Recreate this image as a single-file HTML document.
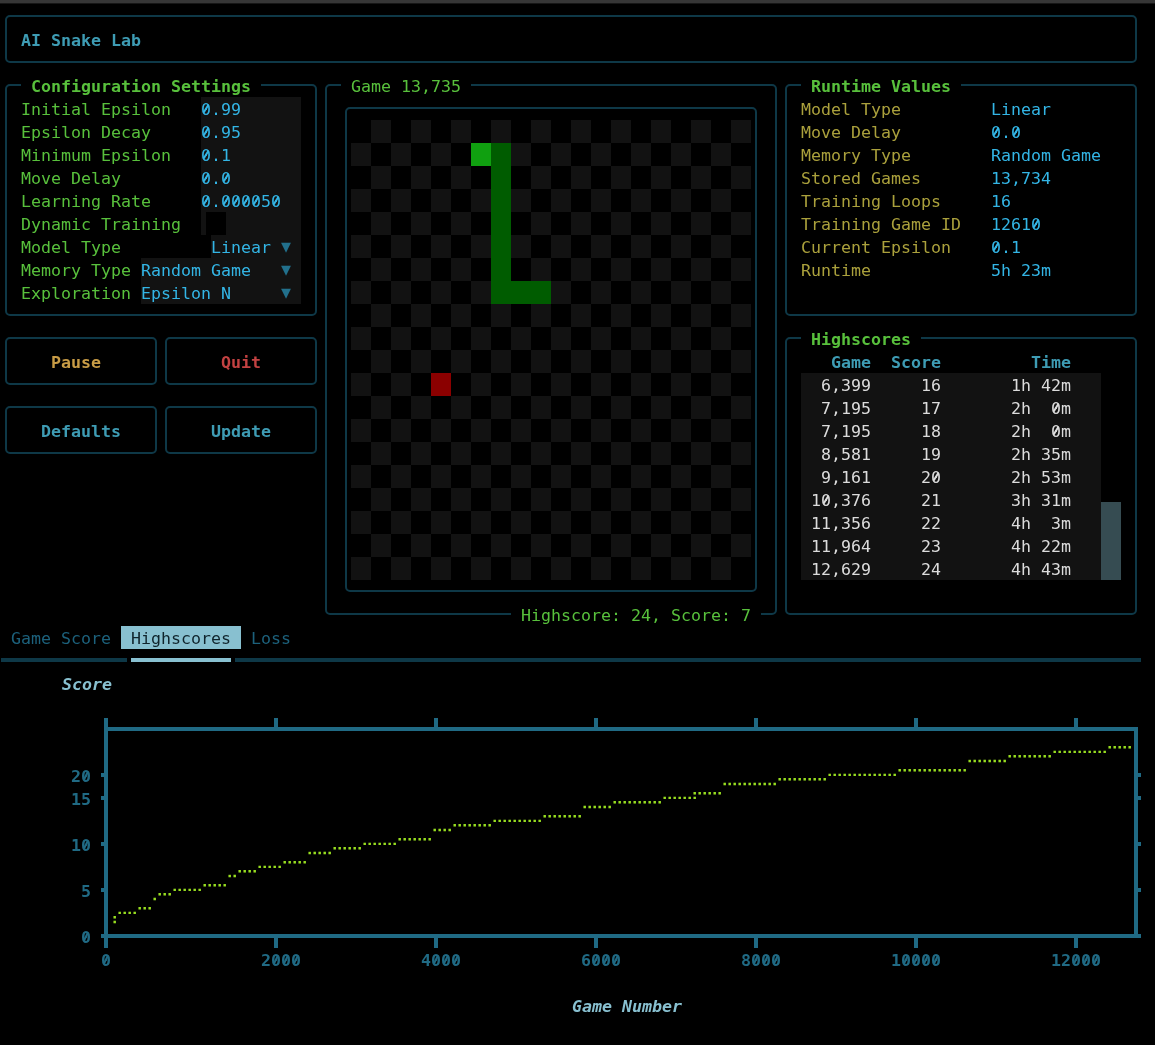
<!DOCTYPE html>
<html lang="en"><head><meta charset="utf-8"><title>AI Snake Lab</title>
<style>
html,body{margin:0;padding:0;background:#000;}
#s{position:relative;width:1155px;height:1045px;background:#000;overflow:hidden;
font-family:"DejaVu Sans Mono","Liberation Mono",monospace;font-size:16.61px;line-height:23px;}
#s svg{position:absolute;left:0;top:0;}
#tx{position:absolute;left:0;top:0;width:1155px;height:1045px;will-change:transform;}
.t{position:absolute;white-space:pre;height:23px;line-height:23px;}
.b{font-weight:bold;}
.i{font-style:italic;margin-left:1px;}
.z{position:relative;}
.z::after{content:"";position:absolute;left:4.3px;top:3.6px;width:1.7px;height:9.4px;background:currentColor;transform:rotate(32deg);}
.b .z::after{left:4px;top:4.3px;width:2px;height:9px;transform:rotate(26deg);}
.br{font-family:"DejaVu Sans",sans-serif;color:#98de20;}
</style></head><body><div id="s">
<svg width="1155" height="1045" viewBox="0 0 1155 1045">
<rect x="0" y="0" width="1155" height="3" fill="#363636"/>
<rect x="0" y="3" width="1155" height="1" fill="#161616"/>
<path d="M6 20 A4 4 0 0 1 10 16 L1132 16 A4 4 0 0 1 1136 20 M6 58 A4 4 0 0 0 10 62 L1132 62 A4 4 0 0 0 1136 58 M6 20 L6 58 M1136 20 L1136 58" fill="none" stroke="#0e3847" stroke-width="2"/>
<path d="M6 89 A4 4 0 0 1 10 85 L21 85 M261 85 L312 85 A4 4 0 0 1 316 89 M6 311 A4 4 0 0 0 10 315 L312 315 A4 4 0 0 0 316 311 M6 89 L6 311 M316 89 L316 311" fill="none" stroke="#0e3847" stroke-width="2"/>
<rect x="201" y="97" width="100" height="138" fill="#121212"/>
<rect x="211" y="235" width="90" height="23" fill="#121212"/>
<rect x="141" y="258" width="160" height="46" fill="#121212"/>
<rect x="206" y="212" width="20" height="23" fill="#000"/>
<path d="M6 342 A4 4 0 0 1 10 338 L152 338 A4 4 0 0 1 156 342 M6 380 A4 4 0 0 0 10 384 L152 384 A4 4 0 0 0 156 380 M6 342 L6 380 M156 342 L156 380" fill="none" stroke="#0e3847" stroke-width="2"/>
<path d="M166 342 A4 4 0 0 1 170 338 L312 338 A4 4 0 0 1 316 342 M166 380 A4 4 0 0 0 170 384 L312 384 A4 4 0 0 0 316 380 M166 342 L166 380 M316 342 L316 380" fill="none" stroke="#0e3847" stroke-width="2"/>
<path d="M6 411 A4 4 0 0 1 10 407 L152 407 A4 4 0 0 1 156 411 M6 449 A4 4 0 0 0 10 453 L152 453 A4 4 0 0 0 156 449 M6 411 L6 449 M156 411 L156 449" fill="none" stroke="#0e3847" stroke-width="2"/>
<path d="M166 411 A4 4 0 0 1 170 407 L312 407 A4 4 0 0 1 316 411 M166 449 A4 4 0 0 0 170 453 L312 453 A4 4 0 0 0 316 449 M166 411 L166 449 M316 411 L316 449" fill="none" stroke="#0e3847" stroke-width="2"/>
<path d="M326 89 A4 4 0 0 1 330 85 L341 85 M471 85 L772 85 A4 4 0 0 1 776 89 M326 610 A4 4 0 0 0 330 614 L511 614 M761 614 L772 614 A4 4 0 0 0 776 610 M326 89 L326 610 M776 89 L776 610" fill="none" stroke="#0e3847" stroke-width="2"/>
<path d="M346 112 A4 4 0 0 1 350 108 L752 108 A4 4 0 0 1 756 112 M346 587 A4 4 0 0 0 350 591 L752 591 A4 4 0 0 0 756 587 M346 112 L346 587 M756 112 L756 587" fill="none" stroke="#0e3847" stroke-width="2"/>
<rect x="371" y="120" width="20" height="23" fill="#121212"/>
<rect x="411" y="120" width="20" height="23" fill="#121212"/>
<rect x="451" y="120" width="20" height="23" fill="#121212"/>
<rect x="491" y="120" width="20" height="23" fill="#121212"/>
<rect x="531" y="120" width="20" height="23" fill="#121212"/>
<rect x="571" y="120" width="20" height="23" fill="#121212"/>
<rect x="611" y="120" width="20" height="23" fill="#121212"/>
<rect x="651" y="120" width="20" height="23" fill="#121212"/>
<rect x="691" y="120" width="20" height="23" fill="#121212"/>
<rect x="731" y="120" width="20" height="23" fill="#121212"/>
<rect x="351" y="143" width="20" height="23" fill="#121212"/>
<rect x="391" y="143" width="20" height="23" fill="#121212"/>
<rect x="431" y="143" width="20" height="23" fill="#121212"/>
<rect x="471" y="143" width="20" height="23" fill="#121212"/>
<rect x="511" y="143" width="20" height="23" fill="#121212"/>
<rect x="551" y="143" width="20" height="23" fill="#121212"/>
<rect x="591" y="143" width="20" height="23" fill="#121212"/>
<rect x="631" y="143" width="20" height="23" fill="#121212"/>
<rect x="671" y="143" width="20" height="23" fill="#121212"/>
<rect x="711" y="143" width="20" height="23" fill="#121212"/>
<rect x="371" y="166" width="20" height="23" fill="#121212"/>
<rect x="411" y="166" width="20" height="23" fill="#121212"/>
<rect x="451" y="166" width="20" height="23" fill="#121212"/>
<rect x="491" y="166" width="20" height="23" fill="#121212"/>
<rect x="531" y="166" width="20" height="23" fill="#121212"/>
<rect x="571" y="166" width="20" height="23" fill="#121212"/>
<rect x="611" y="166" width="20" height="23" fill="#121212"/>
<rect x="651" y="166" width="20" height="23" fill="#121212"/>
<rect x="691" y="166" width="20" height="23" fill="#121212"/>
<rect x="731" y="166" width="20" height="23" fill="#121212"/>
<rect x="351" y="189" width="20" height="23" fill="#121212"/>
<rect x="391" y="189" width="20" height="23" fill="#121212"/>
<rect x="431" y="189" width="20" height="23" fill="#121212"/>
<rect x="471" y="189" width="20" height="23" fill="#121212"/>
<rect x="511" y="189" width="20" height="23" fill="#121212"/>
<rect x="551" y="189" width="20" height="23" fill="#121212"/>
<rect x="591" y="189" width="20" height="23" fill="#121212"/>
<rect x="631" y="189" width="20" height="23" fill="#121212"/>
<rect x="671" y="189" width="20" height="23" fill="#121212"/>
<rect x="711" y="189" width="20" height="23" fill="#121212"/>
<rect x="371" y="212" width="20" height="23" fill="#121212"/>
<rect x="411" y="212" width="20" height="23" fill="#121212"/>
<rect x="451" y="212" width="20" height="23" fill="#121212"/>
<rect x="491" y="212" width="20" height="23" fill="#121212"/>
<rect x="531" y="212" width="20" height="23" fill="#121212"/>
<rect x="571" y="212" width="20" height="23" fill="#121212"/>
<rect x="611" y="212" width="20" height="23" fill="#121212"/>
<rect x="651" y="212" width="20" height="23" fill="#121212"/>
<rect x="691" y="212" width="20" height="23" fill="#121212"/>
<rect x="731" y="212" width="20" height="23" fill="#121212"/>
<rect x="351" y="235" width="20" height="23" fill="#121212"/>
<rect x="391" y="235" width="20" height="23" fill="#121212"/>
<rect x="431" y="235" width="20" height="23" fill="#121212"/>
<rect x="471" y="235" width="20" height="23" fill="#121212"/>
<rect x="511" y="235" width="20" height="23" fill="#121212"/>
<rect x="551" y="235" width="20" height="23" fill="#121212"/>
<rect x="591" y="235" width="20" height="23" fill="#121212"/>
<rect x="631" y="235" width="20" height="23" fill="#121212"/>
<rect x="671" y="235" width="20" height="23" fill="#121212"/>
<rect x="711" y="235" width="20" height="23" fill="#121212"/>
<rect x="371" y="258" width="20" height="23" fill="#121212"/>
<rect x="411" y="258" width="20" height="23" fill="#121212"/>
<rect x="451" y="258" width="20" height="23" fill="#121212"/>
<rect x="491" y="258" width="20" height="23" fill="#121212"/>
<rect x="531" y="258" width="20" height="23" fill="#121212"/>
<rect x="571" y="258" width="20" height="23" fill="#121212"/>
<rect x="611" y="258" width="20" height="23" fill="#121212"/>
<rect x="651" y="258" width="20" height="23" fill="#121212"/>
<rect x="691" y="258" width="20" height="23" fill="#121212"/>
<rect x="731" y="258" width="20" height="23" fill="#121212"/>
<rect x="351" y="281" width="20" height="23" fill="#121212"/>
<rect x="391" y="281" width="20" height="23" fill="#121212"/>
<rect x="431" y="281" width="20" height="23" fill="#121212"/>
<rect x="471" y="281" width="20" height="23" fill="#121212"/>
<rect x="511" y="281" width="20" height="23" fill="#121212"/>
<rect x="551" y="281" width="20" height="23" fill="#121212"/>
<rect x="591" y="281" width="20" height="23" fill="#121212"/>
<rect x="631" y="281" width="20" height="23" fill="#121212"/>
<rect x="671" y="281" width="20" height="23" fill="#121212"/>
<rect x="711" y="281" width="20" height="23" fill="#121212"/>
<rect x="371" y="304" width="20" height="23" fill="#121212"/>
<rect x="411" y="304" width="20" height="23" fill="#121212"/>
<rect x="451" y="304" width="20" height="23" fill="#121212"/>
<rect x="491" y="304" width="20" height="23" fill="#121212"/>
<rect x="531" y="304" width="20" height="23" fill="#121212"/>
<rect x="571" y="304" width="20" height="23" fill="#121212"/>
<rect x="611" y="304" width="20" height="23" fill="#121212"/>
<rect x="651" y="304" width="20" height="23" fill="#121212"/>
<rect x="691" y="304" width="20" height="23" fill="#121212"/>
<rect x="731" y="304" width="20" height="23" fill="#121212"/>
<rect x="351" y="327" width="20" height="23" fill="#121212"/>
<rect x="391" y="327" width="20" height="23" fill="#121212"/>
<rect x="431" y="327" width="20" height="23" fill="#121212"/>
<rect x="471" y="327" width="20" height="23" fill="#121212"/>
<rect x="511" y="327" width="20" height="23" fill="#121212"/>
<rect x="551" y="327" width="20" height="23" fill="#121212"/>
<rect x="591" y="327" width="20" height="23" fill="#121212"/>
<rect x="631" y="327" width="20" height="23" fill="#121212"/>
<rect x="671" y="327" width="20" height="23" fill="#121212"/>
<rect x="711" y="327" width="20" height="23" fill="#121212"/>
<rect x="371" y="350" width="20" height="23" fill="#121212"/>
<rect x="411" y="350" width="20" height="23" fill="#121212"/>
<rect x="451" y="350" width="20" height="23" fill="#121212"/>
<rect x="491" y="350" width="20" height="23" fill="#121212"/>
<rect x="531" y="350" width="20" height="23" fill="#121212"/>
<rect x="571" y="350" width="20" height="23" fill="#121212"/>
<rect x="611" y="350" width="20" height="23" fill="#121212"/>
<rect x="651" y="350" width="20" height="23" fill="#121212"/>
<rect x="691" y="350" width="20" height="23" fill="#121212"/>
<rect x="731" y="350" width="20" height="23" fill="#121212"/>
<rect x="351" y="373" width="20" height="23" fill="#121212"/>
<rect x="391" y="373" width="20" height="23" fill="#121212"/>
<rect x="431" y="373" width="20" height="23" fill="#121212"/>
<rect x="471" y="373" width="20" height="23" fill="#121212"/>
<rect x="511" y="373" width="20" height="23" fill="#121212"/>
<rect x="551" y="373" width="20" height="23" fill="#121212"/>
<rect x="591" y="373" width="20" height="23" fill="#121212"/>
<rect x="631" y="373" width="20" height="23" fill="#121212"/>
<rect x="671" y="373" width="20" height="23" fill="#121212"/>
<rect x="711" y="373" width="20" height="23" fill="#121212"/>
<rect x="371" y="396" width="20" height="23" fill="#121212"/>
<rect x="411" y="396" width="20" height="23" fill="#121212"/>
<rect x="451" y="396" width="20" height="23" fill="#121212"/>
<rect x="491" y="396" width="20" height="23" fill="#121212"/>
<rect x="531" y="396" width="20" height="23" fill="#121212"/>
<rect x="571" y="396" width="20" height="23" fill="#121212"/>
<rect x="611" y="396" width="20" height="23" fill="#121212"/>
<rect x="651" y="396" width="20" height="23" fill="#121212"/>
<rect x="691" y="396" width="20" height="23" fill="#121212"/>
<rect x="731" y="396" width="20" height="23" fill="#121212"/>
<rect x="351" y="419" width="20" height="23" fill="#121212"/>
<rect x="391" y="419" width="20" height="23" fill="#121212"/>
<rect x="431" y="419" width="20" height="23" fill="#121212"/>
<rect x="471" y="419" width="20" height="23" fill="#121212"/>
<rect x="511" y="419" width="20" height="23" fill="#121212"/>
<rect x="551" y="419" width="20" height="23" fill="#121212"/>
<rect x="591" y="419" width="20" height="23" fill="#121212"/>
<rect x="631" y="419" width="20" height="23" fill="#121212"/>
<rect x="671" y="419" width="20" height="23" fill="#121212"/>
<rect x="711" y="419" width="20" height="23" fill="#121212"/>
<rect x="371" y="442" width="20" height="23" fill="#121212"/>
<rect x="411" y="442" width="20" height="23" fill="#121212"/>
<rect x="451" y="442" width="20" height="23" fill="#121212"/>
<rect x="491" y="442" width="20" height="23" fill="#121212"/>
<rect x="531" y="442" width="20" height="23" fill="#121212"/>
<rect x="571" y="442" width="20" height="23" fill="#121212"/>
<rect x="611" y="442" width="20" height="23" fill="#121212"/>
<rect x="651" y="442" width="20" height="23" fill="#121212"/>
<rect x="691" y="442" width="20" height="23" fill="#121212"/>
<rect x="731" y="442" width="20" height="23" fill="#121212"/>
<rect x="351" y="465" width="20" height="23" fill="#121212"/>
<rect x="391" y="465" width="20" height="23" fill="#121212"/>
<rect x="431" y="465" width="20" height="23" fill="#121212"/>
<rect x="471" y="465" width="20" height="23" fill="#121212"/>
<rect x="511" y="465" width="20" height="23" fill="#121212"/>
<rect x="551" y="465" width="20" height="23" fill="#121212"/>
<rect x="591" y="465" width="20" height="23" fill="#121212"/>
<rect x="631" y="465" width="20" height="23" fill="#121212"/>
<rect x="671" y="465" width="20" height="23" fill="#121212"/>
<rect x="711" y="465" width="20" height="23" fill="#121212"/>
<rect x="371" y="488" width="20" height="23" fill="#121212"/>
<rect x="411" y="488" width="20" height="23" fill="#121212"/>
<rect x="451" y="488" width="20" height="23" fill="#121212"/>
<rect x="491" y="488" width="20" height="23" fill="#121212"/>
<rect x="531" y="488" width="20" height="23" fill="#121212"/>
<rect x="571" y="488" width="20" height="23" fill="#121212"/>
<rect x="611" y="488" width="20" height="23" fill="#121212"/>
<rect x="651" y="488" width="20" height="23" fill="#121212"/>
<rect x="691" y="488" width="20" height="23" fill="#121212"/>
<rect x="731" y="488" width="20" height="23" fill="#121212"/>
<rect x="351" y="511" width="20" height="23" fill="#121212"/>
<rect x="391" y="511" width="20" height="23" fill="#121212"/>
<rect x="431" y="511" width="20" height="23" fill="#121212"/>
<rect x="471" y="511" width="20" height="23" fill="#121212"/>
<rect x="511" y="511" width="20" height="23" fill="#121212"/>
<rect x="551" y="511" width="20" height="23" fill="#121212"/>
<rect x="591" y="511" width="20" height="23" fill="#121212"/>
<rect x="631" y="511" width="20" height="23" fill="#121212"/>
<rect x="671" y="511" width="20" height="23" fill="#121212"/>
<rect x="711" y="511" width="20" height="23" fill="#121212"/>
<rect x="371" y="534" width="20" height="23" fill="#121212"/>
<rect x="411" y="534" width="20" height="23" fill="#121212"/>
<rect x="451" y="534" width="20" height="23" fill="#121212"/>
<rect x="491" y="534" width="20" height="23" fill="#121212"/>
<rect x="531" y="534" width="20" height="23" fill="#121212"/>
<rect x="571" y="534" width="20" height="23" fill="#121212"/>
<rect x="611" y="534" width="20" height="23" fill="#121212"/>
<rect x="651" y="534" width="20" height="23" fill="#121212"/>
<rect x="691" y="534" width="20" height="23" fill="#121212"/>
<rect x="731" y="534" width="20" height="23" fill="#121212"/>
<rect x="351" y="557" width="20" height="23" fill="#121212"/>
<rect x="391" y="557" width="20" height="23" fill="#121212"/>
<rect x="431" y="557" width="20" height="23" fill="#121212"/>
<rect x="471" y="557" width="20" height="23" fill="#121212"/>
<rect x="511" y="557" width="20" height="23" fill="#121212"/>
<rect x="551" y="557" width="20" height="23" fill="#121212"/>
<rect x="591" y="557" width="20" height="23" fill="#121212"/>
<rect x="631" y="557" width="20" height="23" fill="#121212"/>
<rect x="671" y="557" width="20" height="23" fill="#121212"/>
<rect x="711" y="557" width="20" height="23" fill="#121212"/>
<rect x="491" y="143" width="20" height="161" fill="#005c00"/>
<rect x="491" y="281" width="60" height="23" fill="#005c00"/>
<rect x="471" y="143" width="20" height="23" fill="#10a010"/>
<rect x="431" y="373" width="20" height="23" fill="#8b0000"/>
<path d="M786 89 A4 4 0 0 1 790 85 L801 85 M961 85 L1132 85 A4 4 0 0 1 1136 89 M786 311 A4 4 0 0 0 790 315 L1132 315 A4 4 0 0 0 1136 311 M786 89 L786 311 M1136 89 L1136 311" fill="none" stroke="#0e3847" stroke-width="2"/>
<path d="M786 342 A4 4 0 0 1 790 338 L801 338 M921 338 L1132 338 A4 4 0 0 1 1136 342 M786 610 A4 4 0 0 0 790 614 L1132 614 A4 4 0 0 0 1136 610 M786 342 L786 610 M1136 342 L1136 610" fill="none" stroke="#0e3847" stroke-width="2"/>
<rect x="801" y="373" width="300" height="207" fill="#121212"/>
<rect x="1101" y="502" width="20" height="78" fill="#364c52"/>
<rect x="121" y="626" width="120" height="23" fill="#88c0d0"/>
<rect x="1" y="658" width="126" height="4" fill="#0e3847"/>
<rect x="131" y="658" width="100" height="4" fill="#88c0d0"/>
<rect x="235" y="658" width="906" height="4" fill="#0e3847"/>
<rect x="104" y="727" width="1034" height="4" fill="#206a84"/>
<rect x="104" y="934" width="1034" height="4" fill="#206a84"/>
<rect x="104" y="718" width="4" height="220" fill="#206a84"/>
<rect x="1134" y="727" width="4" height="211" fill="#206a84"/>
<rect x="104" y="718" width="4" height="9" fill="#206a84"/>
<rect x="104" y="938" width="4" height="10" fill="#206a84"/>
<rect x="274" y="718" width="4" height="9" fill="#206a84"/>
<rect x="274" y="938" width="4" height="10" fill="#206a84"/>
<rect x="434" y="718" width="4" height="9" fill="#206a84"/>
<rect x="434" y="938" width="4" height="10" fill="#206a84"/>
<rect x="594" y="718" width="4" height="9" fill="#206a84"/>
<rect x="594" y="938" width="4" height="10" fill="#206a84"/>
<rect x="754" y="718" width="4" height="9" fill="#206a84"/>
<rect x="754" y="938" width="4" height="10" fill="#206a84"/>
<rect x="914" y="718" width="4" height="9" fill="#206a84"/>
<rect x="914" y="938" width="4" height="10" fill="#206a84"/>
<rect x="1074" y="718" width="4" height="9" fill="#206a84"/>
<rect x="1074" y="938" width="4" height="10" fill="#206a84"/>
<rect x="101" y="773" width="3" height="4" fill="#206a84"/>
<rect x="1138" y="773" width="3" height="4" fill="#206a84"/>
<rect x="101" y="796" width="3" height="4" fill="#206a84"/>
<rect x="1138" y="796" width="3" height="4" fill="#206a84"/>
<rect x="101" y="842" width="3" height="4" fill="#206a84"/>
<rect x="1138" y="842" width="3" height="4" fill="#206a84"/>
<rect x="101" y="888" width="3" height="4" fill="#206a84"/>
<rect x="1138" y="888" width="3" height="4" fill="#206a84"/>
<rect x="101" y="934" width="3" height="4" fill="#206a84"/>
<rect x="1138" y="934" width="3" height="4" fill="#206a84"/>
</svg>
<div id="tx">
<span class="t b" style="left:21px;top:29px;color:#3e9cb4;">AI Snake Lab</span>
<span class="t b" style="left:31px;top:75px;color:#58c03c;">Configuration Settings</span>
<span class="t" style="left:21px;top:98px;color:#58c03c;">Initial Epsilon</span>
<span class="t" style="left:21px;top:121px;color:#58c03c;">Epsilon Decay</span>
<span class="t" style="left:21px;top:144px;color:#58c03c;">Minimum Epsilon</span>
<span class="t" style="left:21px;top:167px;color:#58c03c;">Move Delay</span>
<span class="t" style="left:21px;top:190px;color:#58c03c;">Learning Rate</span>
<span class="t" style="left:21px;top:213px;color:#58c03c;">Dynamic Training</span>
<span class="t" style="left:21px;top:236px;color:#58c03c;">Model Type</span>
<span class="t" style="left:21px;top:259px;color:#58c03c;">Memory Type</span>
<span class="t" style="left:21px;top:282px;color:#58c03c;">Exploration</span>
<span class="t" style="left:201px;top:98px;color:#33b5e5;"><span class="z">0</span>.99</span>
<span class="t" style="left:201px;top:121px;color:#33b5e5;"><span class="z">0</span>.95</span>
<span class="t" style="left:201px;top:144px;color:#33b5e5;"><span class="z">0</span>.1</span>
<span class="t" style="left:201px;top:167px;color:#33b5e5;"><span class="z">0</span>.<span class="z">0</span></span>
<span class="t" style="left:201px;top:190px;color:#33b5e5;"><span class="z">0</span>.<span class="z">0</span><span class="z">0</span><span class="z">0</span><span class="z">0</span>5<span class="z">0</span></span>
<span class="t" style="left:211px;top:236px;color:#33b5e5;">Linear</span>
<span class="t" style="left:281px;top:236px;color:#22708c;margin-top:-0.6px;">▼</span>
<span class="t" style="left:141px;top:259px;color:#33b5e5;">Random Game</span>
<span class="t" style="left:281px;top:259px;color:#22708c;margin-top:-0.6px;">▼</span>
<span class="t" style="left:141px;top:282px;color:#33b5e5;">Epsilon N</span>
<span class="t" style="left:281px;top:282px;color:#22708c;margin-top:-0.6px;">▼</span>
<span class="t b" style="left:51px;top:351px;color:#c89c46;">Pause</span>
<span class="t b" style="left:221px;top:351px;color:#c34242;">Quit</span>
<span class="t b" style="left:41px;top:420px;color:#3e9cb4;">Defaults</span>
<span class="t b" style="left:211px;top:420px;color:#3e9cb4;">Update</span>
<span class="t" style="left:351px;top:75px;color:#58c03c;">Game 13,735</span>
<span class="t" style="left:521px;top:604px;color:#58c03c;">Highscore: 24, Score: 7</span>
<span class="t b" style="left:811px;top:75px;color:#58c03c;">Runtime Values</span>
<span class="t" style="left:801px;top:98px;color:#aaa03c;">Model Type</span>
<span class="t" style="left:991px;top:98px;color:#33b5e5;">Linear</span>
<span class="t" style="left:801px;top:121px;color:#aaa03c;">Move Delay</span>
<span class="t" style="left:991px;top:121px;color:#33b5e5;"><span class="z">0</span>.<span class="z">0</span></span>
<span class="t" style="left:801px;top:144px;color:#aaa03c;">Memory Type</span>
<span class="t" style="left:991px;top:144px;color:#33b5e5;">Random Game</span>
<span class="t" style="left:801px;top:167px;color:#aaa03c;">Stored Games</span>
<span class="t" style="left:991px;top:167px;color:#33b5e5;">13,734</span>
<span class="t" style="left:801px;top:190px;color:#aaa03c;">Training Loops</span>
<span class="t" style="left:991px;top:190px;color:#33b5e5;">16</span>
<span class="t" style="left:801px;top:213px;color:#aaa03c;">Training Game ID</span>
<span class="t" style="left:991px;top:213px;color:#33b5e5;">1261<span class="z">0</span></span>
<span class="t" style="left:801px;top:236px;color:#aaa03c;">Current Epsilon</span>
<span class="t" style="left:991px;top:236px;color:#33b5e5;"><span class="z">0</span>.1</span>
<span class="t" style="left:801px;top:259px;color:#aaa03c;">Runtime</span>
<span class="t" style="left:991px;top:259px;color:#33b5e5;">5h 23m</span>
<span class="t b" style="left:811px;top:328px;color:#58c03c;">Highscores</span>
<span class="t b" style="left:831px;top:351px;color:#3e9cb4;">Game</span>
<span class="t b" style="left:891px;top:351px;color:#3e9cb4;">Score</span>
<span class="t b" style="left:1031px;top:351px;color:#3e9cb4;">Time</span>
<span class="t" style="left:821px;top:374px;color:#dcdcdc;">6,399</span>
<span class="t" style="left:921px;top:374px;color:#dcdcdc;">16</span>
<span class="t" style="left:1011px;top:374px;color:#dcdcdc;">1h 42m</span>
<span class="t" style="left:821px;top:397px;color:#dcdcdc;">7,195</span>
<span class="t" style="left:921px;top:397px;color:#dcdcdc;">17</span>
<span class="t" style="left:1011px;top:397px;color:#dcdcdc;">2h  <span class="z">0</span>m</span>
<span class="t" style="left:821px;top:420px;color:#dcdcdc;">7,195</span>
<span class="t" style="left:921px;top:420px;color:#dcdcdc;">18</span>
<span class="t" style="left:1011px;top:420px;color:#dcdcdc;">2h  <span class="z">0</span>m</span>
<span class="t" style="left:821px;top:443px;color:#dcdcdc;">8,581</span>
<span class="t" style="left:921px;top:443px;color:#dcdcdc;">19</span>
<span class="t" style="left:1011px;top:443px;color:#dcdcdc;">2h 35m</span>
<span class="t" style="left:821px;top:466px;color:#dcdcdc;">9,161</span>
<span class="t" style="left:921px;top:466px;color:#dcdcdc;">2<span class="z">0</span></span>
<span class="t" style="left:1011px;top:466px;color:#dcdcdc;">2h 53m</span>
<span class="t" style="left:811px;top:489px;color:#dcdcdc;">1<span class="z">0</span>,376</span>
<span class="t" style="left:921px;top:489px;color:#dcdcdc;">21</span>
<span class="t" style="left:1011px;top:489px;color:#dcdcdc;">3h 31m</span>
<span class="t" style="left:811px;top:512px;color:#dcdcdc;">11,356</span>
<span class="t" style="left:921px;top:512px;color:#dcdcdc;">22</span>
<span class="t" style="left:1011px;top:512px;color:#dcdcdc;">4h  3m</span>
<span class="t" style="left:811px;top:535px;color:#dcdcdc;">11,964</span>
<span class="t" style="left:921px;top:535px;color:#dcdcdc;">23</span>
<span class="t" style="left:1011px;top:535px;color:#dcdcdc;">4h 22m</span>
<span class="t" style="left:811px;top:558px;color:#dcdcdc;">12,629</span>
<span class="t" style="left:921px;top:558px;color:#dcdcdc;">24</span>
<span class="t" style="left:1011px;top:558px;color:#dcdcdc;">4h 43m</span>
<span class="t" style="left:11px;top:627px;color:#1c617c;">Game Score</span>
<span class="t" style="left:131px;top:627px;color:#10242c;">Highscores</span>
<span class="t" style="left:251px;top:627px;color:#1c617c;">Loss</span>
<span class="t b i" style="left:61px;top:673px;color:#88c0d0;">Score</span>
<span class="t b i" style="left:571px;top:995px;color:#88c0d0;">Game Number</span>
<span class="t b" style="left:71px;top:765px;color:#206a84;">2<span class="z">0</span></span>
<span class="t b" style="left:71px;top:788px;color:#206a84;">15</span>
<span class="t b" style="left:71px;top:834px;color:#206a84;">1<span class="z">0</span></span>
<span class="t b" style="left:71px;top:880px;color:#206a84;"> 5</span>
<span class="t b" style="left:71px;top:926px;color:#206a84;"> <span class="z">0</span></span>
<span class="t b" style="left:101px;top:949px;color:#206a84;"><span class="z">0</span></span>
<span class="t b" style="left:261px;top:949px;color:#206a84;">2<span class="z">0</span><span class="z">0</span><span class="z">0</span></span>
<span class="t b" style="left:421px;top:949px;color:#206a84;">4<span class="z">0</span><span class="z">0</span><span class="z">0</span></span>
<span class="t b" style="left:581px;top:949px;color:#206a84;">6<span class="z">0</span><span class="z">0</span><span class="z">0</span></span>
<span class="t b" style="left:741px;top:949px;color:#206a84;">8<span class="z">0</span><span class="z">0</span><span class="z">0</span></span>
<span class="t b" style="left:891px;top:949px;color:#206a84;">1<span class="z">0</span><span class="z">0</span><span class="z">0</span><span class="z">0</span></span>
<span class="t b" style="left:1051px;top:949px;color:#206a84;">12<span class="z">0</span><span class="z">0</span><span class="z">0</span></span>
<span class="t br" style="left:111px;top:903px">⡔</span>
<span class="t br" style="left:121px;top:903px">⠒</span>
<span class="t br" style="left:131px;top:903px">⠊</span>
<span class="t br" style="left:141px;top:903px">⠉</span>
<span class="t br" style="left:151px;top:880px">⡠</span>
<span class="t br" style="left:161px;top:880px">⠤</span>
<span class="t br" style="left:171px;top:880px">⠒</span>
<span class="t br" style="left:181px;top:880px">⠒</span>
<span class="t br" style="left:191px;top:880px">⠒</span>
<span class="t br" style="left:201px;top:880px">⠉</span>
<span class="t br" style="left:211px;top:880px">⠉</span>
<span class="t br" style="left:221px;top:857px">⢀</span>
<span class="t br" style="left:221px;top:880px">⠁</span>
<span class="t br" style="left:231px;top:857px">⡠</span>
<span class="t br" style="left:241px;top:857px">⠤</span>
<span class="t br" style="left:251px;top:857px">⠔</span>
<span class="t br" style="left:261px;top:857px">⠒</span>
<span class="t br" style="left:271px;top:857px">⠒</span>
<span class="t br" style="left:281px;top:857px">⠉</span>
<span class="t br" style="left:291px;top:857px">⠉</span>
<span class="t br" style="left:301px;top:834px">⢀</span>
<span class="t br" style="left:301px;top:857px">⠁</span>
<span class="t br" style="left:311px;top:834px">⣀</span>
<span class="t br" style="left:321px;top:834px">⣀</span>
<span class="t br" style="left:331px;top:834px">⠤</span>
<span class="t br" style="left:341px;top:834px">⠤</span>
<span class="t br" style="left:351px;top:834px">⠤</span>
<span class="t br" style="left:361px;top:834px">⠒</span>
<span class="t br" style="left:371px;top:834px">⠒</span>
<span class="t br" style="left:381px;top:834px">⠒</span>
<span class="t br" style="left:391px;top:834px">⠊</span>
<span class="t br" style="left:401px;top:834px">⠉</span>
<span class="t br" style="left:411px;top:834px">⠉</span>
<span class="t br" style="left:421px;top:834px">⠉</span>
<span class="t br" style="left:431px;top:811px">⣀</span>
<span class="t br" style="left:441px;top:811px">⣀</span>
<span class="t br" style="left:451px;top:811px">⠤</span>
<span class="t br" style="left:461px;top:811px">⠤</span>
<span class="t br" style="left:471px;top:811px">⠤</span>
<span class="t br" style="left:481px;top:811px">⠤</span>
<span class="t br" style="left:491px;top:811px">⠒</span>
<span class="t br" style="left:501px;top:811px">⠒</span>
<span class="t br" style="left:511px;top:811px">⠒</span>
<span class="t br" style="left:521px;top:811px">⠒</span>
<span class="t br" style="left:531px;top:811px">⠒</span>
<span class="t br" style="left:541px;top:811px">⠉</span>
<span class="t br" style="left:551px;top:811px">⠉</span>
<span class="t br" style="left:561px;top:811px">⠉</span>
<span class="t br" style="left:571px;top:811px">⠉</span>
<span class="t br" style="left:581px;top:788px">⣀</span>
<span class="t br" style="left:591px;top:788px">⣀</span>
<span class="t br" style="left:601px;top:788px">⣀</span>
<span class="t br" style="left:611px;top:788px">⠤</span>
<span class="t br" style="left:621px;top:788px">⠤</span>
<span class="t br" style="left:631px;top:788px">⠤</span>
<span class="t br" style="left:641px;top:788px">⠤</span>
<span class="t br" style="left:651px;top:788px">⠤</span>
<span class="t br" style="left:661px;top:788px">⠒</span>
<span class="t br" style="left:671px;top:788px">⠒</span>
<span class="t br" style="left:681px;top:788px">⠒</span>
<span class="t br" style="left:691px;top:788px">⠋</span>
<span class="t br" style="left:701px;top:788px">⠉</span>
<span class="t br" style="left:711px;top:788px">⠉</span>
<span class="t br" style="left:721px;top:765px">⣀</span>
<span class="t br" style="left:731px;top:765px">⣀</span>
<span class="t br" style="left:741px;top:765px">⣀</span>
<span class="t br" style="left:751px;top:765px">⣀</span>
<span class="t br" style="left:761px;top:765px">⣀</span>
<span class="t br" style="left:771px;top:765px">⡠</span>
<span class="t br" style="left:781px;top:765px">⠤</span>
<span class="t br" style="left:791px;top:765px">⠤</span>
<span class="t br" style="left:801px;top:765px">⠤</span>
<span class="t br" style="left:811px;top:765px">⠤</span>
<span class="t br" style="left:821px;top:765px">⠔</span>
<span class="t br" style="left:831px;top:765px">⠒</span>
<span class="t br" style="left:841px;top:765px">⠒</span>
<span class="t br" style="left:851px;top:765px">⠒</span>
<span class="t br" style="left:861px;top:765px">⠒</span>
<span class="t br" style="left:871px;top:765px">⠒</span>
<span class="t br" style="left:881px;top:765px">⠒</span>
<span class="t br" style="left:891px;top:765px">⠊</span>
<span class="t br" style="left:901px;top:765px">⠉</span>
<span class="t br" style="left:911px;top:765px">⠉</span>
<span class="t br" style="left:921px;top:765px">⠉</span>
<span class="t br" style="left:931px;top:765px">⠉</span>
<span class="t br" style="left:941px;top:765px">⠉</span>
<span class="t br" style="left:951px;top:765px">⠉</span>
<span class="t br" style="left:961px;top:742px">⢀</span>
<span class="t br" style="left:961px;top:765px">⠁</span>
<span class="t br" style="left:971px;top:742px">⣀</span>
<span class="t br" style="left:981px;top:742px">⣀</span>
<span class="t br" style="left:991px;top:742px">⣀</span>
<span class="t br" style="left:1001px;top:742px">⡠</span>
<span class="t br" style="left:1011px;top:742px">⠤</span>
<span class="t br" style="left:1021px;top:742px">⠤</span>
<span class="t br" style="left:1031px;top:742px">⠤</span>
<span class="t br" style="left:1041px;top:742px">⠤</span>
<span class="t br" style="left:1051px;top:742px">⠒</span>
<span class="t br" style="left:1061px;top:742px">⠒</span>
<span class="t br" style="left:1071px;top:742px">⠒</span>
<span class="t br" style="left:1081px;top:742px">⠒</span>
<span class="t br" style="left:1091px;top:742px">⠒</span>
<span class="t br" style="left:1101px;top:742px">⠊</span>
<span class="t br" style="left:1111px;top:742px">⠉</span>
<span class="t br" style="left:1121px;top:742px">⠉</span>
</div>
</div></body></html>
